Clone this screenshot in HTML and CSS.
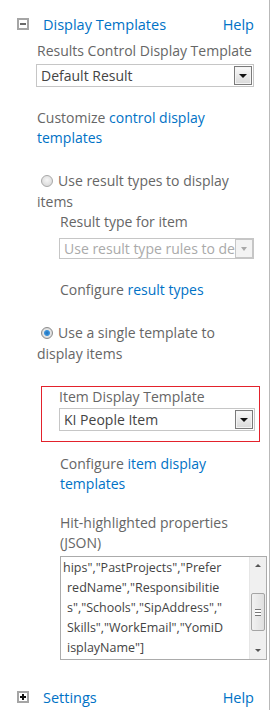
FILE: index.html
```html
<!DOCTYPE html>
<html lang="en">
<head>
    <meta charset="UTF-8">
    <title>Display Templates</title>
    <link rel="stylesheet" href="styles.css">
</head>
<body>
    <div class="pane">
        <div class="section-head">
            <span class="toggle"><span class="toggle-minus"></span></span>
            <a class="section-title" href="#">Display Templates</a>
            <a class="help" href="#">Help</a>
        </div>

        <div class="section-body">
            <div class="field-label">Results Control Display Template</div>
            <div class="select">
                <span class="select-text">Default Result</span>
                <span class="select-button"><span class="arrow"></span></span>
            </div>

            <p class="note">Customize <a href="#">control display templates</a></p>

            <p class="choice"><span class="radio"></span>Use result types to display items</p>
            <div class="sub">
                <div class="field-label">Result type for item</div>
                <div class="select select-disabled">
                    <span class="select-text">Use result type rules to de</span>
                    <span class="select-button"><span class="arrow"></span></span>
                </div>
                <p class="note">Configure <a href="#">result types</a></p>
            </div>

            <p class="choice choice-second"><span class="radio radio-on"></span>Use a single template to display items</p>

            <div class="highlight">
                <div class="field-label">Item Display Template</div>
                <div class="select">
                    <span class="select-text">KI People Item</span>
                    <span class="select-button"><span class="arrow"></span></span>
                </div>
            </div>

            <div class="sub">
                <p class="note note-after-box">Configure <a href="#">item display templates</a></p>
                <div class="field-label field-label-gap">Hit-highlighted properties (JSON)</div>
                <div class="textarea">
                    <div class="textarea-text">
                        <div class="first-line">hips","PastProjects","Prefer</div>
                        <div>redName","Responsibilitie</div>
                        <div>s","Schools","SipAddress","</div>
                        <div>Skills","WorkEmail","YomiD</div>
                        <div>isplayName"]</div>
                    </div>
                    <div class="scrollbar">
                        <span class="scroll-arrow"><span class="arrow arrow-up"></span></span>
                        <span class="scroll-track"><span class="thumb"><span class="grip"></span></span></span>
                        <span class="scroll-arrow"><span class="arrow arrow-small"></span></span>
                    </div>
                </div>
            </div>
        </div>

        <div class="section-head section-head-last">
            <span class="toggle"><span class="toggle-plus"></span></span>
            <a class="section-title" href="#">Settings</a>
            <a class="help" href="#">Help</a>
        </div>
    </div>
</body>
</html>
```

FILE: styles.css
```css
body {
    margin: 0;
    font-family: "Open Sans", "Noto Sans", sans-serif;
    font-size: 14px;
    color: #666;
    background: #fff;
}

a {
    color: #0072c6;
    text-decoration: none;
}

p {
    margin: 0;
}

.pane {
    box-sizing: border-box;
    width: 270px;
    height: 710px;
    border-right: 1px solid #b9b9b9;
    overflow: hidden;
}

.section-head {
    display: flex;
    align-items: center;
    height: 20px;
    margin-top: 14px;
    padding: 0 15px 0 17px;
    font-size: 14.5px;
}

.section-head-last {
    margin-top: 27px;
}

.toggle {
    box-sizing: border-box;
    width: 12px;
    height: 12px;
    border: 2px solid #a5a5a5;
    background: #fff;
    display: flex;
    align-items: center;
    justify-content: center;
}

.toggle-minus {
    width: 6px;
    height: 2px;
    background: #6a6a6a;
}

.toggle-plus {
    position: relative;
    width: 6px;
    height: 2px;
    background: #111;
}

.toggle-plus::after {
    content: "";
    position: absolute;
    left: 2px;
    top: -2px;
    width: 2px;
    height: 6px;
    background: #111;
}

.section-title {
    margin-left: 14px;
}

.help {
    margin-left: auto;
}

.section-body {
    padding: 0 15px 0 37px;
    line-height: 20px;
}

.field-label {
    margin-top: 7px;
}

.select {
    box-sizing: border-box;
    display: flex;
    align-items: center;
    height: 23px;
    margin-top: 3px;
    margin-left: -1px;
    border: 1px solid #c6c6c6;
    background: #fff;
    color: #444;
}

.select-text {
    flex: 1;
    padding-left: 4px;
    white-space: nowrap;
    overflow: hidden;
}

.select-button {
    box-sizing: border-box;
    display: flex;
    align-items: center;
    justify-content: center;
    width: 18px;
    height: 19px;
    margin-right: 1px;
    border: 1px solid #7a7a7a;
    box-shadow: inset 0 0 0 1px #f4f4f4;
    background: linear-gradient(#fafafa, #d9d9d9);
}

.arrow {
    width: 0;
    height: 0;
    border-left: 4px solid transparent;
    border-right: 4px solid transparent;
    border-top: 4px solid #111;
}

.arrow-small {
    border-left-width: 3px;
    border-right-width: 3px;
    border-top: 3px solid #555;
}

.arrow-up {
    border-left-width: 3px;
    border-right-width: 3px;
    border-top: 0;
    border-bottom: 3px solid #555;
}

.select-disabled {
    height: 21px;
    margin-top: 6px;
    color: #aaa;
}

.select-disabled .select-button {
    height: 19px;
    margin-right: 0;
    border-color: #c6c6c6;
    box-shadow: none;
    background: #f3f3f3;
}

.select-disabled .arrow {
    border-top-color: #a9a9a9;
    border-left-width: 3px;
    border-right-width: 3px;
}

.note {
    margin-top: 21px;
}

.choice {
    margin-top: 22px;
    line-height: 21px;
}

.choice-second {
    margin-top: 22px;
}

.radio {
    display: inline-block;
    box-sizing: border-box;
    width: 12px;
    height: 12px;
    margin: 0 5px 0 4px;
    vertical-align: -1px;
    border-radius: 50%;
    border: 1px solid #a8a8a8;
    background: radial-gradient(circle at 50% 40%, #f6f6f6, #d2d2d2);
}

.radio-on {
    border-color: #8c8c8c;
    background: radial-gradient(circle, #1f6fb8 0, #3b94dd 2.5px, #e6e6e6 3.5px, #cfcfcf 6px);
}

.sub {
    padding-left: 23px;
}

.sub .field-label {
    margin-top: 0;
}

.sub .field-label-gap {
    margin-top: 19px;
}

.highlight {
    margin: 22px -6px 0 4px;
    padding: 0 4px 10px 17px;
    border: 1px solid #e3222c;
}

.highlight .field-label {
    margin-top: 0;
}

.highlight .select {
    margin-top: 1px;
    margin-left: 0;
}

.note-after-box {
    margin-top: 12px;
}

.textarea {
    box-sizing: border-box;
    display: flex;
    height: 104px;
    margin: 3px -13px 0 0;
    border: 1px solid #ababab;
    background: #fff;
    color: #444;
    font-size: 12.5px;
}

.textarea-text {
    flex: 1;
    padding: 1px 0 0 6px;
    overflow: hidden;
}

.textarea-text div {
    white-space: nowrap;
}

.first-line {
    margin-left: -4px;
}

.scrollbar {
    display: flex;
    flex-direction: column;
    width: 16px;
    background: #f0f0f0;
    border-left: 1px solid #e6e6e6;
}

.scroll-arrow {
    display: flex;
    align-items: center;
    justify-content: center;
    height: 17px;
}

.scroll-track {
    flex: 1;
    display: flex;
    flex-direction: column;
    justify-content: center;
    padding: 0 1px;
}

.thumb {
    box-sizing: border-box;
    display: flex;
    align-items: center;
    justify-content: center;
    height: 38px;
    margin-top: 8px;
    border: 1px solid #a5a5a5;
    border-radius: 2px;
    background: linear-gradient(90deg, #f2f2f2, #e0e0e0);
}

.grip {
    width: 6px;
    height: 5px;
    border-top: 1px solid #777;
    border-bottom: 1px solid #777;
    background: linear-gradient(#fff 0, #fff 2px, #777 2px, #777 3px, #fff 3px);
}
```
